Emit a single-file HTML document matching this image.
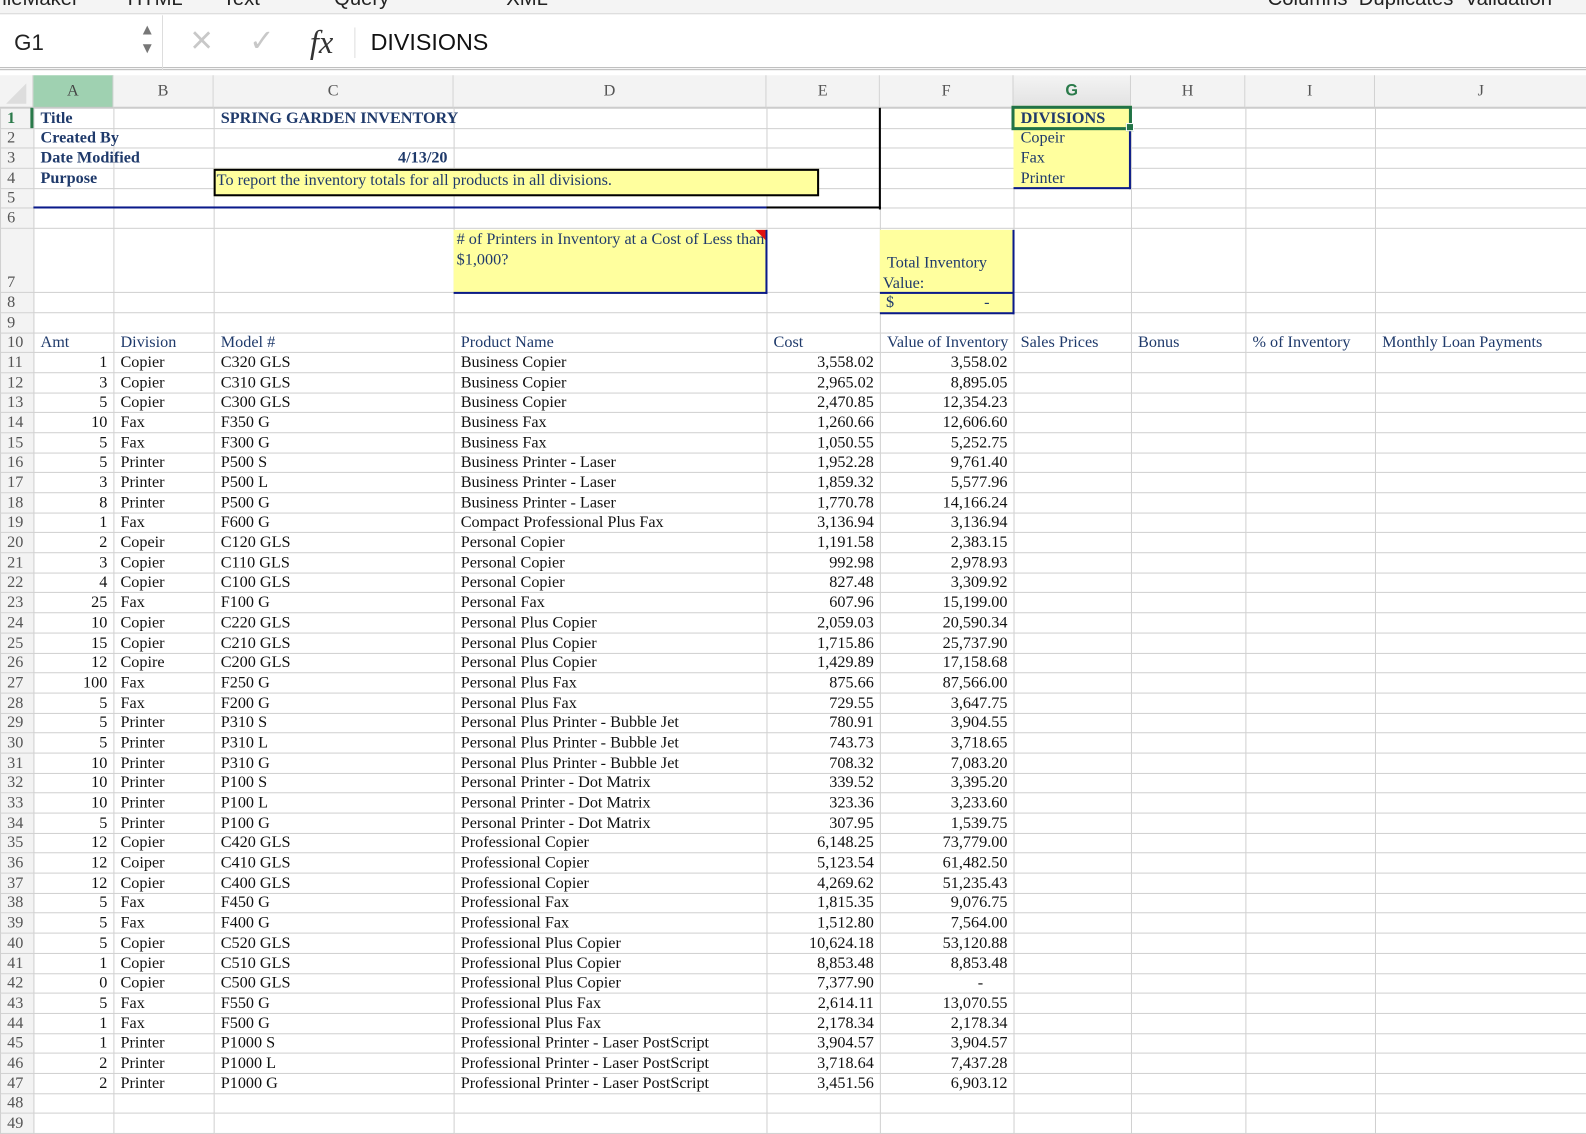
<!DOCTYPE html>
<html><head><meta charset="utf-8"><style>
*{margin:0;padding:0;box-sizing:border-box}
html,body{overflow:hidden}
body{background:#fff;font-family:"Liberation Serif",serif}
#w{position:relative;width:1586px;height:1134px;overflow:hidden;transform:scale(1.0125,1.017);transform-origin:0 0}
.top{position:absolute;left:0;top:0;width:1586px;height:14px;background:#f4f4f4;border-bottom:1px solid #d8d8d8;overflow:hidden}
.top span{position:absolute;top:-12px;font:20px "Liberation Sans",sans-serif;color:#222;white-space:nowrap}
.fbar{position:absolute;left:0;top:15px;width:1586px;height:54px;background:#fff;border-bottom:3px double #b8b8b8}
.ab{position:absolute;top:74px;height:32px;background:#f3f3f3;border-bottom:1px solid #c4c4c4;border-right:1px solid #d0d0d0;text-align:center;line-height:32px;font-size:16px;color:#555}
table{position:absolute;left:0;top:106px;border-collapse:collapse;table-layout:fixed;width:1586px}
td{border:1px solid #d0d0d0;font-size:16px;line-height:17px;white-space:nowrap;overflow:hidden;padding:0 6px 1px;color:#111;vertical-align:bottom;height:19.7px}
td.v{overflow:visible}
td:first-child{background:#f3f3f3;color:#555;padding:0 0 1px 6px;border-color:#d0d0d0}
.n{color:#1f3a6b}
.r{text-align:right}
.b{font-weight:bold;color:#1f3a6b}
.ov{position:absolute}
</style></head><body><div id="w">
<div class="top"><span style="left:-10px">FileMaker</span><span style="left:126px">HTML</span><span style="left:220px">Text</span><span style="left:330px">Query</span><span style="left:500px">XML</span><span style="left:1252px">Columns &nbsp;Duplicates &nbsp;Validation</span></div>
<div class="fbar">
<div style="position:absolute;left:14px;top:14px;font:22px 'Liberation Sans',sans-serif;color:#222">G1</div>
<div style="position:absolute;left:138px;top:6px;color:#777;font-size:15px;line-height:18px">▲<br>▼</div>
<div style="position:absolute;left:160px;top:0;width:1px;height:54px;background:#ddd"></div>
<div style="position:absolute;left:188px;top:4px;font:38px 'Liberation Sans',sans-serif;color:#c8c8c8">×</div>
<div style="position:absolute;left:246px;top:8px;font:30px 'DejaVu Sans',sans-serif;color:#c8c8c8">✓</div>
<div style="position:absolute;left:306px;top:8px;font:italic 32px 'Liberation Serif',serif;color:#333">fx</div>
<div style="position:absolute;left:350px;top:12px;width:1px;height:30px;background:#ddd"></div>
<div style="position:absolute;left:366px;top:13px;font:23px 'Liberation Sans',sans-serif;color:#111">DIVISIONS</div>
</div>
<div class="ab" style="left:0;width:33px"><div style="position:absolute;left:6px;top:8px;width:0;height:0;border-left:20px solid transparent;border-bottom:20px solid #ddd"></div></div>
<div class="ab" style="left:33px;width:79px;background:#9fd1b1;color:#444">A</div>
<div class="ab" style="left:112px;width:99px">B</div>
<div class="ab" style="left:211px;width:237px">C</div>
<div class="ab" style="left:448px;width:309px">D</div>
<div class="ab" style="left:757px;width:112px">E</div>
<div class="ab" style="left:869px;width:132px">F</div>
<div class="ab" style="left:1001px;width:116px;background:linear-gradient(#f4f4f4,#e2e2e2);color:#2a7a4a;font-weight:bold;font-family:'Liberation Sans',sans-serif">G</div>
<div class="ab" style="left:1117px;width:113px">H</div>
<div class="ab" style="left:1230px;width:128px">I</div>
<div class="ab" style="left:1358px;width:210px">J</div>
<div class="ab" style="left:1568px;width:18px"></div>
<table>
<colgroup><col style="width:33px"><col style="width:79px"><col style="width:99px"><col style="width:237px"><col style="width:309px"><col style="width:112px"><col style="width:132px"><col style="width:116px"><col style="width:113px"><col style="width:128px"><col style="width:210px"><col style="width:18px"></colgroup>
<tr><td style="color:#2a7a4a;font-weight:bold">1</td><td class="b">Title</td><td></td><td class="b v">SPRING GARDEN INVENTORY</td><td></td><td></td><td></td><td class="b">DIVISIONS</td><td></td><td></td><td></td><td></td></tr>
<tr><td>2</td><td class="b v">Created By</td><td></td><td></td><td></td><td></td><td></td><td class="n">Copeir</td><td></td><td></td><td></td><td></td></tr>
<tr><td>3</td><td class="b v">Date Modified</td><td></td><td class="b r">4/13/20</td><td></td><td></td><td></td><td class="n">Fax</td><td></td><td></td><td></td><td></td></tr>
<tr><td>4</td><td class="b">Purpose</td><td></td><td></td><td></td><td></td><td></td><td class="n">Printer</td><td></td><td></td><td></td><td></td></tr>
<tr><td>5</td><td></td><td></td><td></td><td></td><td></td><td></td><td></td><td></td><td></td><td></td><td></td></tr>
<tr><td>6</td><td></td><td></td><td></td><td></td><td></td><td></td><td></td><td></td><td></td><td></td><td></td></tr>
<tr><td style="height:63px">7</td><td></td><td></td><td></td><td></td><td></td><td></td><td></td><td></td><td></td><td></td><td></td></tr>
<tr><td>8</td><td></td><td></td><td></td><td></td><td></td><td></td><td></td><td></td><td></td><td></td><td></td></tr>
<tr><td>9</td><td></td><td></td><td></td><td></td><td></td><td></td><td></td><td></td><td></td><td></td><td></td></tr>
<tr class="n"><td>10</td><td class="n">Amt</td><td class="n">Division</td><td class="n">Model #</td><td class="n">Product Name</td><td class="n">Cost</td><td class="n">Value of Inventory</td><td class="n">Sales Prices</td><td class="n">Bonus</td><td class="n">% of Inventory</td><td class="n">Monthly Loan Payments</td><td></td></tr>
<tr><td>11</td><td class="r">1</td><td>Copier</td><td>C320 GLS</td><td>Business Copier</td><td class="r">3,558.02</td><td class="r">3,558.02</td><td></td><td></td><td></td><td></td><td></td></tr>
<tr><td>12</td><td class="r">3</td><td>Copier</td><td>C310 GLS</td><td>Business Copier</td><td class="r">2,965.02</td><td class="r">8,895.05</td><td></td><td></td><td></td><td></td><td></td></tr>
<tr><td>13</td><td class="r">5</td><td>Copier</td><td>C300 GLS</td><td>Business Copier</td><td class="r">2,470.85</td><td class="r">12,354.23</td><td></td><td></td><td></td><td></td><td></td></tr>
<tr><td>14</td><td class="r">10</td><td>Fax</td><td>F350 G</td><td>Business Fax</td><td class="r">1,260.66</td><td class="r">12,606.60</td><td></td><td></td><td></td><td></td><td></td></tr>
<tr><td>15</td><td class="r">5</td><td>Fax</td><td>F300 G</td><td>Business Fax</td><td class="r">1,050.55</td><td class="r">5,252.75</td><td></td><td></td><td></td><td></td><td></td></tr>
<tr><td>16</td><td class="r">5</td><td>Printer</td><td>P500 S</td><td>Business Printer - Laser</td><td class="r">1,952.28</td><td class="r">9,761.40</td><td></td><td></td><td></td><td></td><td></td></tr>
<tr><td>17</td><td class="r">3</td><td>Printer</td><td>P500 L</td><td>Business Printer - Laser</td><td class="r">1,859.32</td><td class="r">5,577.96</td><td></td><td></td><td></td><td></td><td></td></tr>
<tr><td>18</td><td class="r">8</td><td>Printer</td><td>P500 G</td><td>Business Printer - Laser</td><td class="r">1,770.78</td><td class="r">14,166.24</td><td></td><td></td><td></td><td></td><td></td></tr>
<tr><td>19</td><td class="r">1</td><td>Fax</td><td>F600 G</td><td>Compact Professional Plus Fax</td><td class="r">3,136.94</td><td class="r">3,136.94</td><td></td><td></td><td></td><td></td><td></td></tr>
<tr><td>20</td><td class="r">2</td><td>Copeir</td><td>C120 GLS</td><td>Personal Copier</td><td class="r">1,191.58</td><td class="r">2,383.15</td><td></td><td></td><td></td><td></td><td></td></tr>
<tr><td>21</td><td class="r">3</td><td>Copier</td><td>C110 GLS</td><td>Personal Copier</td><td class="r">992.98</td><td class="r">2,978.93</td><td></td><td></td><td></td><td></td><td></td></tr>
<tr><td>22</td><td class="r">4</td><td>Copier</td><td>C100 GLS</td><td>Personal Copier</td><td class="r">827.48</td><td class="r">3,309.92</td><td></td><td></td><td></td><td></td><td></td></tr>
<tr><td>23</td><td class="r">25</td><td>Fax</td><td>F100 G</td><td>Personal Fax</td><td class="r">607.96</td><td class="r">15,199.00</td><td></td><td></td><td></td><td></td><td></td></tr>
<tr><td>24</td><td class="r">10</td><td>Copier</td><td>C220 GLS</td><td>Personal Plus Copier</td><td class="r">2,059.03</td><td class="r">20,590.34</td><td></td><td></td><td></td><td></td><td></td></tr>
<tr><td>25</td><td class="r">15</td><td>Copier</td><td>C210 GLS</td><td>Personal Plus Copier</td><td class="r">1,715.86</td><td class="r">25,737.90</td><td></td><td></td><td></td><td></td><td></td></tr>
<tr><td>26</td><td class="r">12</td><td>Copire</td><td>C200 GLS</td><td>Personal Plus Copier</td><td class="r">1,429.89</td><td class="r">17,158.68</td><td></td><td></td><td></td><td></td><td></td></tr>
<tr><td>27</td><td class="r">100</td><td>Fax</td><td>F250 G</td><td>Personal Plus Fax</td><td class="r">875.66</td><td class="r">87,566.00</td><td></td><td></td><td></td><td></td><td></td></tr>
<tr><td>28</td><td class="r">5</td><td>Fax</td><td>F200 G</td><td>Personal Plus Fax</td><td class="r">729.55</td><td class="r">3,647.75</td><td></td><td></td><td></td><td></td><td></td></tr>
<tr><td>29</td><td class="r">5</td><td>Printer</td><td>P310 S</td><td>Personal Plus Printer - Bubble Jet</td><td class="r">780.91</td><td class="r">3,904.55</td><td></td><td></td><td></td><td></td><td></td></tr>
<tr><td>30</td><td class="r">5</td><td>Printer</td><td>P310 L</td><td>Personal Plus Printer - Bubble Jet</td><td class="r">743.73</td><td class="r">3,718.65</td><td></td><td></td><td></td><td></td><td></td></tr>
<tr><td>31</td><td class="r">10</td><td>Printer</td><td>P310 G</td><td>Personal Plus Printer - Bubble Jet</td><td class="r">708.32</td><td class="r">7,083.20</td><td></td><td></td><td></td><td></td><td></td></tr>
<tr><td>32</td><td class="r">10</td><td>Printer</td><td>P100 S</td><td>Personal Printer - Dot Matrix</td><td class="r">339.52</td><td class="r">3,395.20</td><td></td><td></td><td></td><td></td><td></td></tr>
<tr><td>33</td><td class="r">10</td><td>Printer</td><td>P100 L</td><td>Personal Printer - Dot Matrix</td><td class="r">323.36</td><td class="r">3,233.60</td><td></td><td></td><td></td><td></td><td></td></tr>
<tr><td>34</td><td class="r">5</td><td>Printer</td><td>P100 G</td><td>Personal Printer - Dot Matrix</td><td class="r">307.95</td><td class="r">1,539.75</td><td></td><td></td><td></td><td></td><td></td></tr>
<tr><td>35</td><td class="r">12</td><td>Copier</td><td>C420 GLS</td><td>Professional Copier</td><td class="r">6,148.25</td><td class="r">73,779.00</td><td></td><td></td><td></td><td></td><td></td></tr>
<tr><td>36</td><td class="r">12</td><td>Coiper</td><td>C410 GLS</td><td>Professional Copier</td><td class="r">5,123.54</td><td class="r">61,482.50</td><td></td><td></td><td></td><td></td><td></td></tr>
<tr><td>37</td><td class="r">12</td><td>Copier</td><td>C400 GLS</td><td>Professional Copier</td><td class="r">4,269.62</td><td class="r">51,235.43</td><td></td><td></td><td></td><td></td><td></td></tr>
<tr><td>38</td><td class="r">5</td><td>Fax</td><td>F450 G</td><td>Professional Fax</td><td class="r">1,815.35</td><td class="r">9,076.75</td><td></td><td></td><td></td><td></td><td></td></tr>
<tr><td>39</td><td class="r">5</td><td>Fax</td><td>F400 G</td><td>Professional Fax</td><td class="r">1,512.80</td><td class="r">7,564.00</td><td></td><td></td><td></td><td></td><td></td></tr>
<tr><td>40</td><td class="r">5</td><td>Copier</td><td>C520 GLS</td><td>Professional Plus Copier</td><td class="r">10,624.18</td><td class="r">53,120.88</td><td></td><td></td><td></td><td></td><td></td></tr>
<tr><td>41</td><td class="r">1</td><td>Copier</td><td>C510 GLS</td><td>Professional Plus Copier</td><td class="r">8,853.48</td><td class="r">8,853.48</td><td></td><td></td><td></td><td></td><td></td></tr>
<tr><td>42</td><td class="r">0</td><td>Copier</td><td>C500 GLS</td><td>Professional Plus Copier</td><td class="r">7,377.90</td><td class="r">-&nbsp;&nbsp;&nbsp;&nbsp;&nbsp;&nbsp;</td><td></td><td></td><td></td><td></td><td></td></tr>
<tr><td>43</td><td class="r">5</td><td>Fax</td><td>F550 G</td><td>Professional Plus Fax</td><td class="r">2,614.11</td><td class="r">13,070.55</td><td></td><td></td><td></td><td></td><td></td></tr>
<tr><td>44</td><td class="r">1</td><td>Fax</td><td>F500 G</td><td>Professional Plus Fax</td><td class="r">2,178.34</td><td class="r">2,178.34</td><td></td><td></td><td></td><td></td><td></td></tr>
<tr><td>45</td><td class="r">1</td><td>Printer</td><td>P1000 S</td><td>Professional Printer - Laser PostScript</td><td class="r">3,904.57</td><td class="r">3,904.57</td><td></td><td></td><td></td><td></td><td></td></tr>
<tr><td>46</td><td class="r">2</td><td>Printer</td><td>P1000 L</td><td>Professional Printer - Laser PostScript</td><td class="r">3,718.64</td><td class="r">7,437.28</td><td></td><td></td><td></td><td></td><td></td></tr>
<tr><td>47</td><td class="r">2</td><td>Printer</td><td>P1000 G</td><td>Professional Printer - Laser PostScript</td><td class="r">3,451.56</td><td class="r">6,903.12</td><td></td><td></td><td></td><td></td><td></td></tr>
<tr><td>48</td><td></td><td></td><td></td><td></td><td></td><td></td><td></td><td></td><td></td><td></td><td></td></tr>
<tr><td>49</td><td></td><td></td><td></td><td></td><td></td><td></td><td></td><td></td><td></td><td></td><td></td></tr>
</table>
<div class="ov" style="left:30px;top:106px;width:3px;height:20px;background:#2a7a4a"></div>
<div class="ov" style="left:211px;top:166px;width:598px;height:27px;background:#ffff9e;border:2px solid #000;font-size:16px;color:#1f3a6b;padding:0 1px;line-height:19px;white-space:nowrap">To report the inventory totals for all products in all divisions.</div>
<div class="ov" style="left:868px;top:106px;width:2px;height:100px;background:#000"></div>
<div class="ov" style="left:757px;top:203px;width:113px;height:2px;background:#000"></div>
<div class="ov" style="left:33px;top:203px;width:724px;height:2px;background:#0a1a8a"></div>
<div class="ov" style="left:1001px;top:126px;width:116px;height:60px;background:#ffff9e;border-right:2px solid #0a1a8a;border-bottom:2px solid #0a1a8a;font-size:16px;color:#1f3a6b;padding-left:7px;line-height:20px">Copeir<br>Fax<br>Printer</div>
<div class="ov" style="left:999px;top:104px;width:119px;height:24px;background:#ffff9e;border:3px solid #217346;font-size:16px;font-weight:bold;color:#1f3a6b;padding-left:6px;line-height:19px">DIVISIONS</div>
<div class="ov" style="left:1112px;top:121px;width:8px;height:8px;background:#217346;border:1px solid #fff"></div>
<div class="ov" style="left:448px;top:226px;width:310px;height:63px;background:#ffff9e;border-right:2px solid #0a1a8a;border-bottom:2px solid #0a1a8a;font-size:16px;color:#1f3a6b;padding:0 0 0 3px;line-height:20px;overflow:hidden;white-space:nowrap"> # of Printers in Inventory at a Cost of Less than<br>$1,000?</div>
<div class="ov" style="left:746px;top:226px;width:0;height:0;border-left:10px solid transparent;border-top:10px solid #e01010"></div>
<div class="ov" style="left:869px;top:226px;width:133px;height:83px;background:#ffff9e;border-right:2px solid #0a1a8a;border-bottom:2px solid #0a1a8a;font-size:16px;color:#1f3a6b;line-height:20px">
<div style="position:absolute;left:7px;top:23px">Total Inventory</div>
<div style="position:absolute;left:3px;top:43px">Value:</div>
<div style="position:absolute;left:0;top:61px;width:131px;height:2px;background:#0a1a8a"></div>
<div style="position:absolute;left:6px;top:62px">$</div>
<div style="position:absolute;left:103px;top:62px">-</div>
</div>
</div></body></html>
